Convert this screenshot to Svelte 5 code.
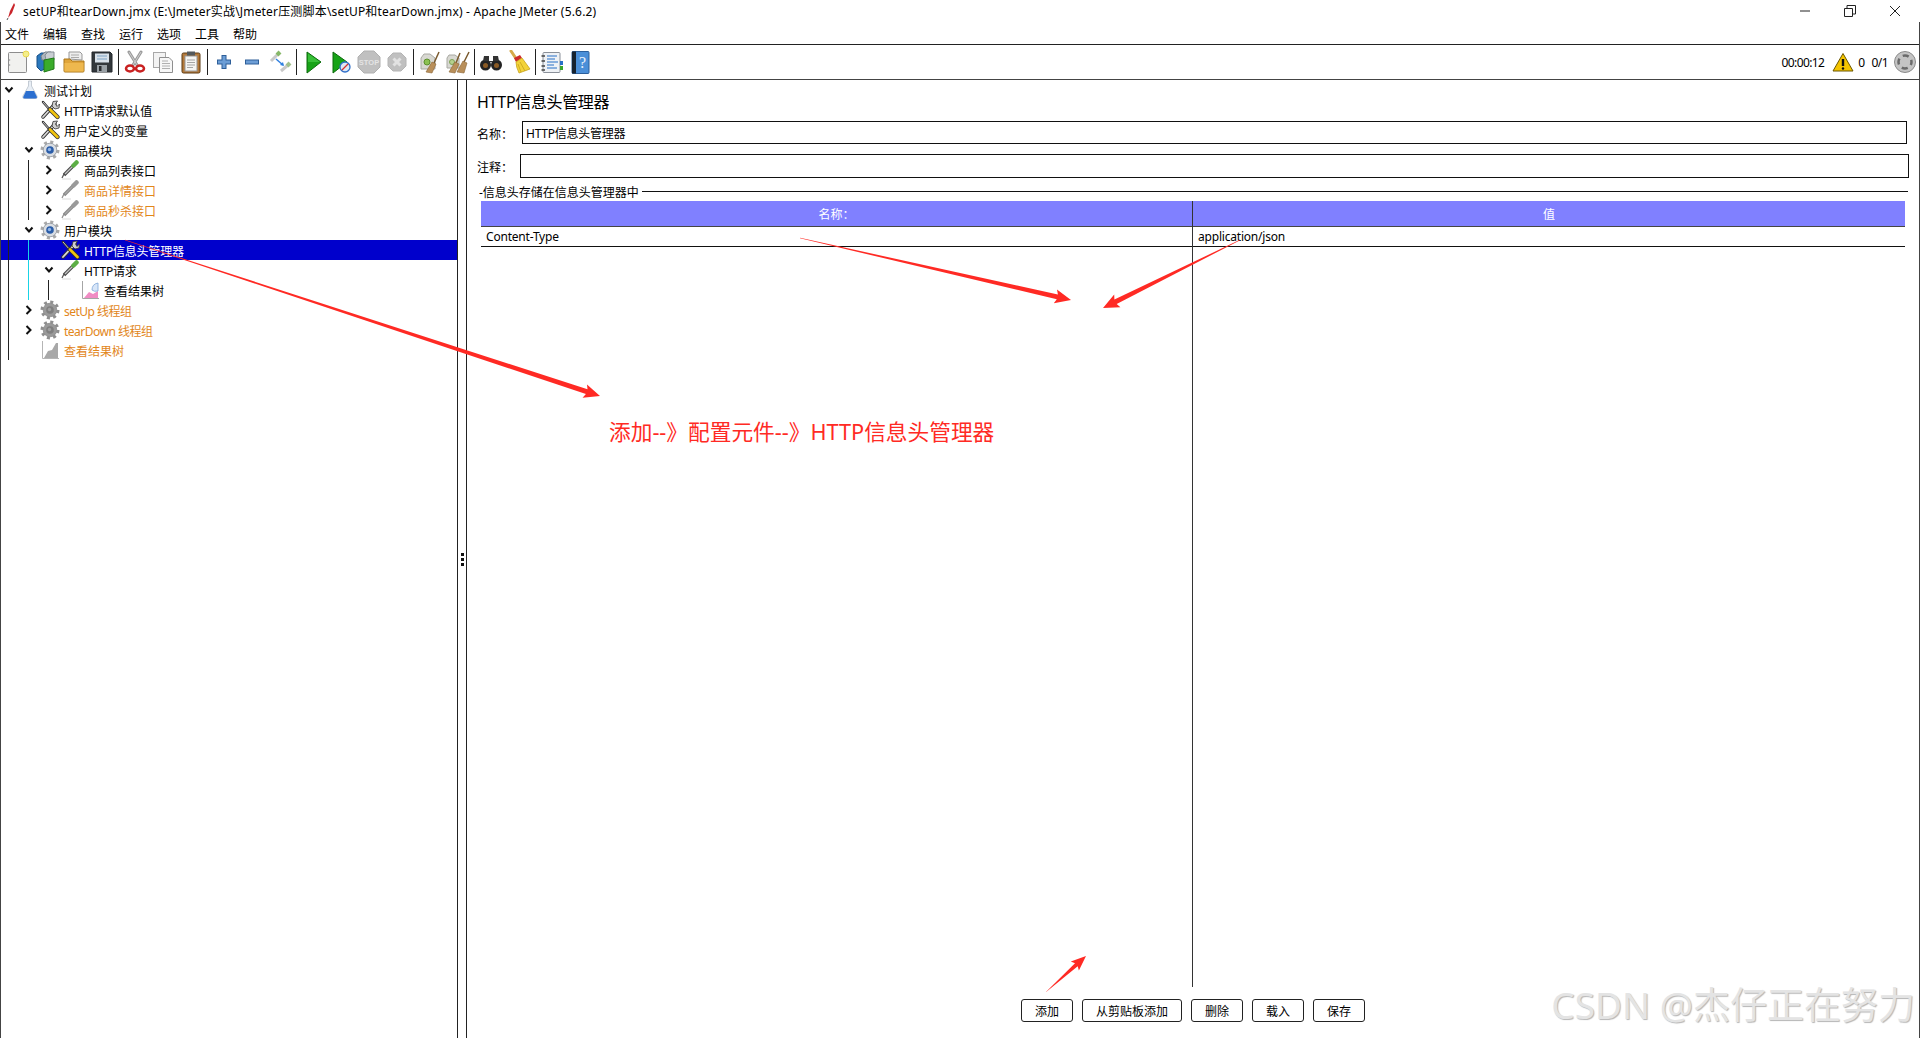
<script lang="ts">
  const menus = ['文件', '编辑', '查找', '运行', '选项', '工具', '帮助'];

  // null is a separator in the toolbar
  const tools = [
    'new', 'templates', 'open', 'save', null,
    'cut', 'copy', 'paste', null,
    'plus', 'minus', 'toggle', null,
    'start', 'startNoPause', 'stop', 'shutdown', null,
    'clear', 'clearAll', null,
    'search', 'broom', null,
    'functions', 'help'
  ];

  const rows = [
    { label: '测试计划', depth: 0, icon: 'flask', open: true },
    { label: 'HTTP请求默认值', depth: 1, icon: 'wrench' },
    { label: '用户定义的变量', depth: 1, icon: 'wrench' },
    { label: '商品模块', depth: 1, icon: 'gear', open: true },
    { label: '商品列表接口', depth: 2, icon: 'pipette', open: false },
    { label: '商品详情接口', depth: 2, icon: 'pipette', open: false, off: true },
    { label: '商品秒杀接口', depth: 2, icon: 'pipette', open: false, off: true },
    { label: '用户模块', depth: 1, icon: 'gear', open: true },
    { label: 'HTTP信息头管理器', depth: 2, icon: 'wrench', selected: true },
    { label: 'HTTP请求', depth: 2, icon: 'pipette', open: true },
    { label: '查看结果树', depth: 3, icon: 'chart' },
    { label: 'setUp 线程组', depth: 1, icon: 'gear', open: false, off: true },
    { label: 'tearDown 线程组', depth: 1, icon: 'gear', open: false, off: true },
    { label: '查看结果树', depth: 1, icon: 'chart', off: true }
  ];

  // tree guide lines, tops are relative to the tree
  const guides = [
    { x: 7, top: 20, height: 260, color: '#222' },
    { x: 27, top: 80, height: 60, color: '#222' },
    { x: 27, top: 160, height: 60, color: '#19d3e6' },
    { x: 47, top: 200, height: 20, color: '#222' }
  ];

  const buttons = ['添加', '从剪贴板添加', '删除', '载入', '保存'];

  function arrow(x1: number, y1: number, x2: number, y2: number, w = 5, head = 14, barb = 7) {
    const len = Math.hypot(x2 - x1, y2 - y1);
    const ux = (x2 - x1) / len;
    const uy = (y2 - y1) / len;
    const at = (along: number, side: number) =>
      `${(x1 + ux * along - uy * side).toFixed(1)},${(y1 + uy * along + ux * side).toFixed(1)}`;
    return [
      at(0, 0.2),
      at(len - head, w / 2),
      at(len - head - 2, barb),
      at(len, 0),
      at(len - head - 2, -barb),
      at(len - head, -w / 2),
      at(0, -0.2)
    ].join(' ');
  }

  const arrows = [
    arrow(125, 240, 600, 396),
    arrow(800, 238, 1071, 300),
    arrow(1240, 240, 1103, 308),
    arrow(1046, 992, 1086, 956, 4, 13, 6)
  ];
</script>

{#snippet icon(name)}
  <svg class="ico" viewBox="0 0 24 24" width="24" height="24" aria-hidden="true">
    {#if name === 'new'}
      <rect x="2.5" y="2.5" width="18" height="20" rx="1" fill="#f1f1ef" stroke="#8d8d8d" />
      <circle cx="3.5" cy="10" r=".8" fill="#999" /><circle cx="3.5" cy="15" r=".8" fill="#999" />
      <circle cx="20" cy="4" r="3" fill="#f4ee8a" stroke="#e9d64f" />
    {:else if name === 'templates'}
      <path d="M3 6 7 3 12 3V18L7 21 3 17Z" fill="#2a78bd" stroke="#164e86" />
      <path d="M7 6 11 2 17 2V10H8Z" fill="#aeb6bd" stroke="#77808a" />
      <path d="M11 5 14 2H20V10H12Z" fill="#c9ced3" stroke="#858d95" />
      <path d="M10 10 20 8V19L10 22Z" fill="#3aac2b" stroke="#217a18" />
    {:else if name === 'open'}
      <path d="M7 9V2H18L20 4V10Z" fill="#eee" stroke="#999" />
      <path d="M9 5H17M9 7.500H17" stroke="#aaa" />
      <path d="M2 9H8L10 11H22V21Q22 22 21 22H3Q2 22 2 21Z" fill="#e0a53a" stroke="#a9761c" />
      <path d="M2.500 13H21.500V21.500H2.500Z" fill="#eeb84e" />
    {:else if name === 'save'}
      <path d="M2 2H20L22 4V22H2Z" fill="#33383c" stroke="#22262a" />
      <rect x="5" y="3.500" width="14" height="9" fill="#d9e2ea" />
      <path d="M7 6H17M7 9H17" stroke="#7fa3c4" />
      <rect x="7" y="15" width="10" height="7" fill="#9aa1a6" />
      <rect x="9" y="16" width="2.500" height="5" fill="#2a2d30" />
    {:else if name === 'cut'}
      <path d="M6 2 14 15M18 2 10 15" stroke="#9a9a9a" stroke-width="3" stroke-linecap="round" />
      <path d="M6 2 14 15M18 2 10 15" stroke="#cfcfcf" stroke-width="1" />
      <ellipse cx="7" cy="18.500" rx="4" ry="3" fill="none" stroke="#c92121" stroke-width="2.500" />
      <ellipse cx="17" cy="18.500" rx="4" ry="3" fill="none" stroke="#c92121" stroke-width="2.500" />
    {:else if name === 'copy'}
      <rect x="2.500" y="2.500" width="12" height="15" fill="#f3f3f3" stroke="#a8a8a8" />
      <path d="M8.500 7.500H18L21.500 11V22.500H8.500Z" fill="#f7f7f7" stroke="#8f8f8f" />
      <path d="M11 11H17M11 13.500H19M11 16H19M11 18.500H19" stroke="#b0b0b0" />
    {:else if name === 'paste'}
      <rect x="3" y="3" width="18" height="20" rx="1.500" fill="#b57a3a" stroke="#5a3a16" />
      <rect x="6" y="6" width="12" height="15" fill="#f5f5f3" stroke="#999" />
      <rect x="8" y="1.500" width="8" height="4" fill="#54595c" />
      <path d="M8 10H16M8 12.500H16M8 15H16M8 17.500H14" stroke="#a5a5a5" />
    {:else if name === 'plus'}
      <path d="M12 5V19M5 12H19" stroke="#2e5f99" stroke-width="5" />
      <path d="M12 6V18M6 12H18" stroke="#6d9ed6" stroke-width="3" />
    {:else if name === 'minus'}
      <path d="M5 12H19" stroke="#2e5f99" stroke-width="5" />
      <path d="M6 12H18" stroke="#6d9ed6" stroke-width="3" />
    {:else if name === 'toggle'}
      <path d="M3 11 10 4" stroke="#c9c9c9" stroke-width="3" />
      <path d="M9 5 12 2" stroke="#86b868" stroke-width="4" />
      <path d="M13 21 20 15" stroke="#c9c9c9" stroke-width="3" />
      <path d="M19 16 22 13" stroke="#a0c08c" stroke-width="4" />
      <path d="M8 9 15 15" stroke="#2f7fe0" stroke-width="1.500" />
      <path d="M16 16 12 15 15 12Z" fill="#2f7fe0" />
    {:else if name === 'start'}
      <path d="M6 2 20 12 6 23Z" fill="#17a317" stroke="#0c6b0c" />
      <path d="M7 3.500V12L19 12Z" fill="#38c038" />
    {:else if name === 'startNoPause'}
      <path d="M4 2 18 12 4 23Z" fill="#17a317" stroke="#0c6b0c" />
      <circle cx="16" cy="17" r="5" fill="#dce8f6" stroke="#2f6fc9" stroke-width="1.300" />
      <path d="M13 20 19 14" stroke="#d83030" stroke-width="1.300" />
    {:else if name === 'stop'}
      <path d="M7 1H17L23 7V17L17 23H7L1 17V7Z" fill="#c0c0c0" stroke="#b0b0b0" />
      <text x="12" y="15" text-anchor="middle" font-size="7.500" font-weight="700" fill="#e4e4e4" font-family="Liberation Sans, sans-serif">STOP</text>
    {:else if name === 'shutdown'}
      <path d="M8 3H16L21 8V16L16 21H8L3 16V8Z" fill="#c0c0c0" stroke="#b4b4b4" />
      <path d="M8.500 8.500 15.500 15.500M15.500 8.500 8.500 15.500" stroke="#e2e2e2" stroke-width="3" />
    {:else if name === 'clear'}
      <path d="M6 4H12L17 8V19H3V8Z" fill="#d8d8d2" stroke="#a8a8a2" />
      <circle cx="9" cy="12" r="3" fill="#8cc152" stroke="#5d8f2c" />
      <path d="M21 2 16 13" stroke="#7a5a2e" stroke-width="1.500" />
      <path d="M14 12 18 14 14 23 8 22Z" fill="#b98f5a" stroke="#8a6535" stroke-width=".6" />
    {:else if name === 'clearAll'}
      <path d="M3 5H9L13 8V18H1V8Z" fill="#d8d8d2" stroke="#a8a8a2" />
      <circle cx="6" cy="12" r="2.500" fill="#b6d18f" stroke="#7fa356" />
      <path d="M14 3 10 13M23 2 18 12" stroke="#7a5a2e" stroke-width="1.500" />
      <path d="M9 12 13 14 9 23 3 22Z" fill="#b98f5a" stroke="#8a6535" stroke-width=".6" />
      <path d="M17 11 21 13 18 23 11 22Z" fill="#b98f5a" stroke="#8a6535" stroke-width=".6" />
    {:else if name === 'search'}
      <circle cx="6.500" cy="15" r="5.500" fill="#222" />
      <circle cx="17.500" cy="15" r="5.500" fill="#222" />
      <path d="M5 6H10V12H14V6H19L20 11H4Z" fill="#333" />
      <circle cx="6.500" cy="15.500" r="2.500" fill="#8a5a24" />
      <circle cx="17.500" cy="15.500" r="2.500" fill="#8a5a24" />
    {:else if name === 'broom'}
      <path d="M4 1 10 10" stroke="#d6a94a" stroke-width="3" stroke-linecap="round" />
      <path d="M7 8 13 5 15 8 9 12Z" fill="#cc2a2a" />
      <path d="M9 12 15 8 23 19 12 23 Q9 17 9 12Z" fill="#f3d338" stroke="#c7a21b" stroke-width=".8" />
      <path d="M13 12 18 21M11 14 14 22" stroke="#c7a21b" stroke-width=".8" />
    {:else if name === 'functions'}
      <rect x="3" y="2.500" width="17" height="20" rx="1" fill="#eef1f5" stroke="#8a9099" />
      <path d="M1.500 6H5M1.500 11H5M1.500 16H5M1.500 20H5" stroke="#444" stroke-width="1.500" />
      <path d="M7 6H17M7 9H15M7 12H18M7 15H14M7 18H17" stroke="#2770c7" stroke-width="1.200" />
      <rect x="20" y="11" width="3" height="4" fill="#2770c7" /><rect x="20" y="16" width="3" height="4" fill="#3aa62b" />
    {:else if name === 'help'}
      <rect x="4" y="1.500" width="17" height="22" rx="1" fill="#4b8fd8" stroke="#2b5f9c" />
      <rect x="4" y="1.500" width="4" height="22" fill="#16222f" />
      <text x="14.500" y="18" text-anchor="middle" font-size="16" fill="#e9f2fb" font-family="Liberation Serif, serif">?</text>
    {/if}
  </svg>
{/snippet}

{#snippet nodeIcon(name, off)}
  <svg class="node-ico" viewBox="0 0 20 20" width="20" height="20" aria-hidden="true">
    {#if name === 'flask'}
      <path d="M8.500 1H11.500V6L17 16Q18 18.500 15.500 18.500H4.500Q2 18.500 3 16L8.500 6Z" fill="#e8eef5" stroke="#b7c0ca" stroke-width=".8" />
      <path d="M6 11H14L17 17Q17 18.500 15.500 18.500H4.500Q3 18.500 3.200 17Z" fill="#2b6fd0" />
    {:else if name === 'wrench'}
      <path d="M3 17 15 4" stroke="#333" stroke-width="3.500" stroke-linecap="round" />
      <path d="M3 17 15 4" stroke="#d8d8d8" stroke-width="1.800" stroke-linecap="round" />
      <path d="M13 1.500 17.500 1 15.500 4 17 6.500 19.500 4 19 8 15 9 12 6Z" fill="#cfcfcf" stroke="#333" stroke-width=".8" />
      <path d="M3 2 10 10" stroke="#333" stroke-width="2.400" stroke-linecap="round" />
      <path d="M3 2 10 10" stroke="#e8e8e8" stroke-width=".8" />
      <path d="M10 9.500 17.500 17" stroke="#333" stroke-width="4.200" stroke-linecap="round" />
      <path d="M10 9.500 17.500 17" stroke="#f1c40f" stroke-width="2.600" stroke-linecap="round" />
    {:else if name === 'gear'}
      <circle cx="10" cy="10" r="8" fill="none" stroke={off ? '#8f8f8f' : '#a9a9a9'} stroke-width="3" stroke-dasharray="3 3.280" />
      <circle cx="10" cy="10" r="6.800" fill={off ? '#9a9a9a' : '#d9dde2'} stroke={off ? '#8a8a8a' : '#8d939a'} stroke-width=".8" />
      <circle cx="10" cy="10" r="3.800" fill={off ? '#7f7f7f' : '#2b5da8'} />
      <circle cx="9.500" cy="9.500" r="1.700" fill={off ? '#a0a0a0' : '#8fb4e6'} />
    {:else if name === 'pipette'}
      <path d="M2 18 L4 14" stroke={off ? '#8f8f8f' : '#555'} stroke-width="1.300" />
      <path d="M4 15 13 6" stroke={off ? '#8a8a8a' : '#4a4a4a'} stroke-width="3.400" />
      <path d="M5 14 12.500 6.500" stroke={off ? '#a8a8a8' : '#c4c4c4'} stroke-width="1.200" />
      <path d="M13.500 5.500 16.500 2.500" stroke={off ? '#9a9a9a' : '#5cae45'} stroke-width="4.500" stroke-linecap="round" />
      <path d="M2 19H11" stroke="#ddd" />
    {:else if name === 'chart'}
      <path d="M2.500 1V18.500H19" fill="none" stroke={off ? '#b5b5b5' : '#a5a5a5'} />
      {#if off}
        <path d="M4 18 8 11 12 10 16 3 18 3V18Z" fill="#a8a8a8" />
      {:else}
        <path d="M4 18 9 12 13 14 18 11V18Z" fill="#f08cc4" />
        <path d="M12 10Q12 4 18 3V11Q14 12 12 10Z" fill="#d8e6f8" stroke="#7ea6d8" stroke-width=".8" />
      {/if}
    {/if}
  </svg>
{/snippet}

<div class="window">
  <header class="titlebar">
    <svg class="app-logo" viewBox="0 0 12 18" width="12" height="18" aria-hidden="true">
      <path d="M9 1 5 9 3 16 7 11 10 3Z" fill="#c9252b" />
      <path d="M3 16 2 18" stroke="#555" />
    </svg>
    <span class="title">setUP和tearDown.jmx (E:\Jmeter实战\Jmeter压测脚本\setUP和tearDown.jmx) - Apache JMeter (5.6.2)</span>
    <div class="win-controls">
      <svg viewBox="0 0 12 12" width="12" height="12"><path d="M1 6H11" stroke="#222" /></svg>
      <svg viewBox="0 0 12 12" width="12" height="12"><path d="M.5 3.500H8.500V11.500H.5ZM3 3.500V.5H11.500V9H8.500" fill="none" stroke="#222" /></svg>
      <svg viewBox="0 0 12 12" width="12" height="12"><path d="M1 1 11 11M11 1 1 11" stroke="#222" /></svg>
    </div>
  </header>

  <div class="frame">
    <nav class="menubar">
      {#each menus as m}<span>{m}</span>{/each}
    </nav>

    <div class="toolbar">
      {#each tools as t}
        {#if t}
          <button class="tool" type="button">{@render icon(t)}</button>
        {:else}
          <span class="sep"></span>
        {/if}
      {/each}
      <div class="status">
        <span class="clock">00:00:12</span>
        <svg viewBox="0 0 22 20" width="22" height="20" aria-hidden="true">
          <path d="M11 1.500 21 19H1Z" fill="#f4c400" stroke="#6b5600" stroke-linejoin="round" />
          <path d="M11 7V14" stroke="#111" stroke-width="2.400" /><circle cx="11" cy="16.500" r="1.200" fill="#111" />
        </svg>
        <span class="warn-count">0</span>
        <span class="threads">0/1</span>
        <svg viewBox="0 0 22 22" width="22" height="22" aria-hidden="true">
          <circle cx="11" cy="11" r="10.500" fill="#c4c4c4" stroke="#8a8a8a" />
          <circle cx="11" cy="11" r="6.500" fill="none" stroke="#6a6a6a" stroke-width="2.500" stroke-dasharray="6.200 4" stroke-dashoffset="3.100" />
        </svg>
      </div>
    </div>

    <main class="workspace">
      <aside class="tree">
        {#each guides as g}
          <span class="guide" style="left:{g.x}px;top:{g.top}px;height:{g.height}px;background:{g.color}"></span>
        {/each}
        {#each rows as r}
          <div class="row" class:selected={r.selected} class:off={r.off} style="padding-left:{r.depth * 20}px">
            <span class="chev">
              {#if r.open === true}
                <svg viewBox="0 0 10 8" width="10" height="8"><path d="M1.500 1.500 5 5.500 8.500 1.500" fill="none" stroke="#111" stroke-width="2" /></svg>
              {:else if r.open === false}
                <svg viewBox="0 0 8 10" width="8" height="10"><path d="M1.500 1 5.500 5 1.500 9" fill="none" stroke="#111" stroke-width="2" /></svg>
              {/if}
            </span>
            {@render nodeIcon(r.icon, r.off)}
            <span class="label" class:latin={/[a-z]/i.test(r.label)} class:spaced={r.label.includes(' ')}>{r.label}</span>
          </div>
        {/each}
      </aside>

      <div class="splitter"><i></i><i></i><i></i></div>

      <section class="editor">
        <h1>HTTP信息头管理器</h1>
        <div class="field name-field">
          <label for="el-name">名称：</label>
          <input id="el-name" value="HTTP信息头管理器" readonly />
        </div>
        <div class="field comment-field">
          <label for="el-comment">注释：</label>
          <input id="el-comment" value="" readonly />
        </div>
        <div class="legend"><span>-信息头存储在信息头管理器中</span><b></b></div>

        <div class="table">
          <div class="col first">
            <div class="head">名称：</div>
            <div class="cell">Content-Type</div>
          </div>
          <div class="col">
            <div class="head">值</div>
            <div class="cell">application/json</div>
          </div>
        </div>

        <div class="actions">
          {#each buttons as b}<button type="button" class:wide={b.length > 2}>{b}</button>{/each}
        </div>
      </section>
    </main>
  </div>

  <svg class="notes" viewBox="0 0 1920 1038" width="1920" height="1038" aria-hidden="true">
    {#each arrows as pts}<polygon points={pts} fill="#ff2a24" />{/each}
  </svg>
  <div class="note-text">添加--》配置元件--》HTTP信息头管理器</div>
  <div class="watermark">CSDN @杰仔正在努力</div>
</div>

<style>
  :global(body) {
    margin: 0;
    background: #fff;
  }

  .window {
    position: relative;
    width: 1920px;
    height: 1038px;
    display: flex;
    flex-direction: column;
    overflow: hidden;
    background: #fff;
    color: #000;
    font-family: "Noto Sans", "Noto Sans CJK SC", sans-serif;
    font-size: 12px;
  }

  .titlebar {
    height: 22px;
    flex: none;
    display: flex;
    align-items: center;
    padding-left: 5px;
  }

  .app-logo {
    margin-right: 6px;
  }

  .title {
    letter-spacing: 0.18px;
  }

  .win-controls {
    margin-left: auto;
    display: flex;
    gap: 33px;
    padding-right: 19px;
  }

  .frame {
    flex: 1;
    min-height: 0;
    display: flex;
    flex-direction: column;
    border-left: 1px solid #444;
    border-right: 1px solid #444;
  }

  .menubar {
    height: 21px;
    flex: none;
    display: flex;
    align-items: center;
    gap: 14px;
    padding: 1px 0 0 4px;
    border-bottom: 1px solid #222;
  }

  .toolbar {
    height: 34px;
    flex: none;
    display: flex;
    align-items: center;
    padding-left: 3px;
    border-bottom: 1px solid #444;
  }

  .tool {
    width: 28px;
    height: 28px;
    padding: 0;
    border: 0;
    background: none;
    display: flex;
    align-items: center;
    justify-content: center;
  }

  .sep {
    width: 1px;
    height: 26px;
    margin: 0 2px;
    background: #222;
  }

  .status {
    margin-left: auto;
    display: flex;
    align-items: center;
    padding-right: 3px;
    letter-spacing: -0.6px;
  }

  .clock {
    margin-right: 8px;
  }

  .warn-count {
    margin: 0 7px 0 4px;
  }

  .threads {
    margin-right: 6px;
  }

  .workspace {
    flex: 1;
    min-height: 0;
    display: flex;
  }

  .tree {
    position: relative;
    width: 456px;
    flex: none;
    border-right: 1px solid #222;
  }

  .guide {
    position: absolute;
    width: 1px;
  }

  .row {
    height: 20px;
    display: flex;
    align-items: center;
    white-space: nowrap;
  }

  .row.selected {
    background: #0000cc;
    color: #fff;
  }

  .row.off {
    color: #e2861a;
  }

  .label {
    padding-top: 2px;
  }

  .label.latin {
    letter-spacing: -0.2px;
  }

  .label.spaced {
    letter-spacing: -0.5px;
  }

  .chev {
    width: 19px;
    flex: none;
    display: flex;
    justify-content: center;
    padding-right: 4px;
    box-sizing: border-box;
  }

  .node-ico {
    flex: none;
    margin-right: 4px;
  }

  .splitter {
    width: 8px;
    flex: none;
    display: flex;
    flex-direction: column;
    align-items: center;
    justify-content: center;
    gap: 2px;
    border-right: 1px solid #222;
  }

  .splitter i {
    width: 3px;
    height: 3px;
    background: #111;
  }

  .editor {
    flex: 1;
    min-width: 0;
    display: flex;
    flex-direction: column;
    padding: 12px 12px 16px 10px;
  }

  h1 {
    margin: 0 0 9px;
    height: 20px;
    line-height: 20px;
    font-size: 16px;
    font-weight: 400;
    letter-spacing: -0.35px;
  }

  .field {
    display: flex;
    align-items: center;
    margin-bottom: 10px;
  }

  .field label {
    padding-top: 2px;
  }

  .field input {
    flex: 1;
    min-width: 0;
    height: 23px;
    box-sizing: border-box;
    border: 1px solid #111;
    padding: 1px 3px 0;
    font: inherit;
    letter-spacing: -0.25px;
    outline: none;
  }

  .name-field label {
    width: 45px;
  }

  .comment-field {
    margin: 0 -2px 6px 0;
  }

  .comment-field label {
    width: 43px;
  }

  .comment-field input {
    height: 24px;
  }

  .legend {
    display: flex;
    align-items: center;
    gap: 3px;
    height: 14px;
    margin: 0 -1px 3px 2px;
    white-space: nowrap;
  }

  .legend span {
    padding-top: 2px;
  }

  .legend b {
    flex: 1;
    height: 1px;
    background: #111;
  }

  .table {
    flex: 1;
    min-height: 0;
    display: flex;
    margin: 0 2px 0 4px;
  }

  .col {
    flex: 1;
    display: flex;
    flex-direction: column;
  }

  .col.first {
    flex: none;
    width: 712px;
    box-sizing: border-box;
    border-right: 1px solid #333;
  }

  .head {
    height: 25px;
    line-height: 27px;
    text-align: center;
    background: #8080ff;
    color: #fff;
    border-bottom: 1px solid #444;
  }

  .cell {
    height: 19px;
    line-height: 19px;
    padding-left: 5px;
    border-bottom: 1px solid #111;
    letter-spacing: -0.2px;
  }

  .actions {
    flex: none;
    display: flex;
    justify-content: center;
    gap: 9px;
    margin: 12px -12px 0 -10px;
  }

  .actions button {
    width: 52px;
    height: 23px;
    padding: 0;
    box-sizing: border-box;
    border: 1px solid #222;
    border-radius: 3px;
    background: #fff;
    font: inherit;
    color: #000;
  }

  .actions button.wide {
    width: 100px;
  }

  .notes {
    position: absolute;
    left: 0;
    top: 0;
    pointer-events: none;
  }

  .note-text {
    position: absolute;
    left: 609px;
    top: 417px;
    line-height: 30px;
    font-size: 21.7px;
    color: #ff2a24;
    white-space: nowrap;
  }

  .watermark {
    position: absolute;
    right: 5px;
    top: 980px;
    line-height: 50px;
    font-size: 37px;
    color: #e4e4e4;
    text-shadow: 1px 1px 1px #b5b5b5;
    white-space: nowrap;
    pointer-events: none;
  }
</style>
